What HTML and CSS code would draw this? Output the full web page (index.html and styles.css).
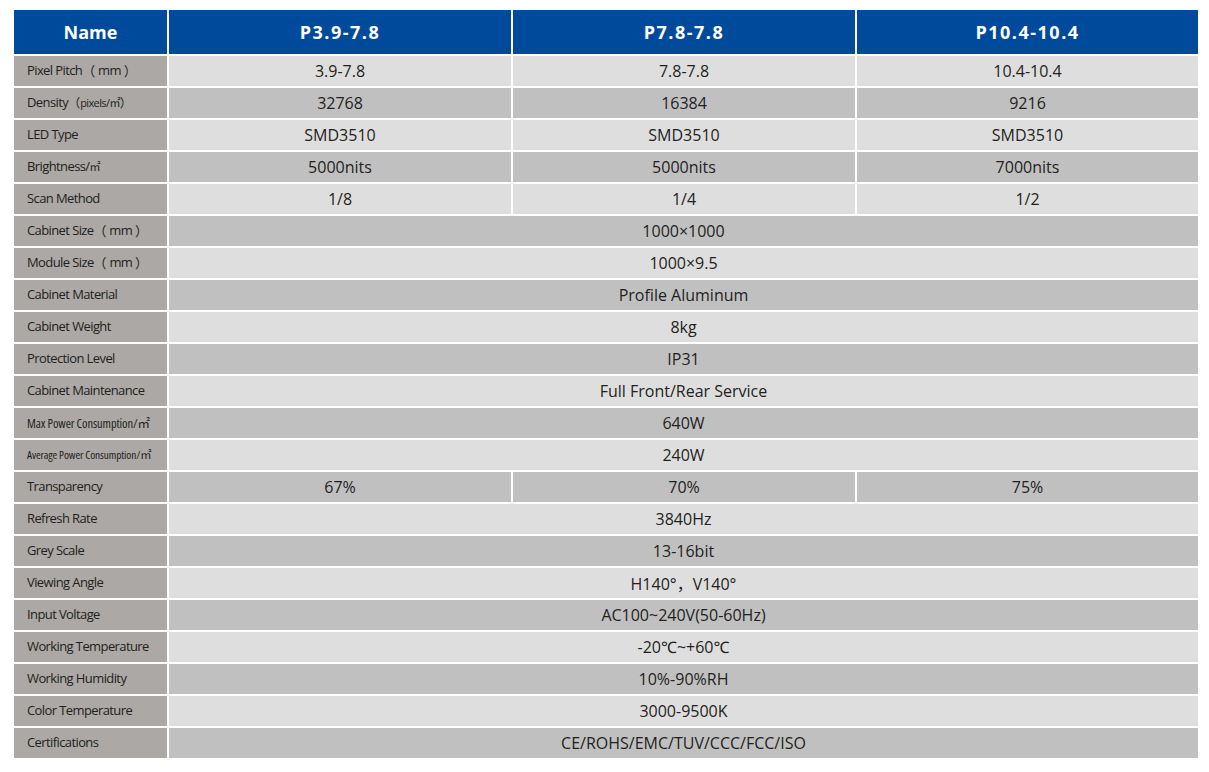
FILE: index.html
```html
<!DOCTYPE html>
<html lang="en">
<head>
<meta charset="utf-8">
<title>Specifications</title>
<link rel="stylesheet" href="styles.css">
</head>
<body>
<div class="spec">
  <div class="hd hd-name">Name</div>
  <div class="hd">P3.9-7.8</div>
  <div class="hd">P7.8-7.8</div>
  <div class="hd">P10.4-10.4</div>

  <div class="lb">Pixel Pitch<span class="fw">（</span>&nbsp;mm&nbsp;<span class="fw">）</span></div>
  <div class="v l">3.9-7.8</div><div class="v l">7.8-7.8</div><div class="v l">10.4-10.4</div>

  <div class="lb">Density<span class="fw fw-sm">（</span><span class="sm">pixels/㎡</span><span class="fw fw-sm">）</span></div>
  <div class="v d">32768</div><div class="v d">16384</div><div class="v d">9216</div>

  <div class="lb">LED Type</div>
  <div class="v l">SMD3510</div><div class="v l">SMD3510</div><div class="v l">SMD3510</div>

  <div class="lb">Brightness/<span class="sm">㎡</span></div>
  <div class="v d">5000nits</div><div class="v d">5000nits</div><div class="v d">7000nits</div>

  <div class="lb">Scan Method</div>
  <div class="v l">1/8</div><div class="v l">1/4</div><div class="v l">1/2</div>

  <div class="lb">Cabinet Size<span class="fw">（</span>&nbsp;mm&nbsp;<span class="fw">）</span></div>
  <div class="v d span">1000×1000</div>

  <div class="lb">Module Size<span class="fw">（</span>&nbsp;mm&nbsp;<span class="fw">）</span></div>
  <div class="v l span">1000×9.5</div>

  <div class="lb">Cabinet Material</div>
  <div class="v d span">Profile Aluminum</div>

  <div class="lb">Cabinet Weight</div>
  <div class="v l span">8kg</div>

  <div class="lb">Protection Level</div>
  <div class="v d span">IP31</div>

  <div class="lb">Cabinet Maintenance</div>
  <div class="v l span">Full Front/Rear Service</div>

  <div class="lb"><span class="cond">Max Power Consumption/㎡</span></div>
  <div class="v d span">640W</div>

  <div class="lb"><span class="cond cond-sm">Average Power Consumption/㎡</span></div>
  <div class="v l span">240W</div>

  <div class="lb">Transparency</div>
  <div class="v d">67%</div><div class="v d">70%</div><div class="v d">75%</div>

  <div class="lb">Refresh Rate</div>
  <div class="v l span">3840Hz</div>

  <div class="lb">Grey Scale</div>
  <div class="v d span">13-16bit</div>

  <div class="lb">Viewing Angle</div>
  <div class="v l span">H140°，V140°</div>

  <div class="lb">Input Voltage</div>
  <div class="v d span">AC100~240V(50-60Hz)</div>

  <div class="lb">Working Temperature</div>
  <div class="v l span">-20℃~+60℃</div>

  <div class="lb">Working Humidity</div>
  <div class="v d span">10%-90%RH</div>

  <div class="lb">Color Temperature</div>
  <div class="v l span">3000-9500K</div>

  <div class="lb">Certifications</div>
  <div class="v d span">CE/ROHS/EMC/TUV/CCC/FCC/ISO</div>
</div>
</body>
</html>
```

FILE: styles.css
```css
html, body {
  margin: 0;
  padding: 0;
  background: #ffffff;
}

body {
  font-family: "Open Sans", "Noto Sans", "Noto Sans CJK SC", sans-serif;
  color: #231f20;
}

.spec {
  display: grid;
  grid-template-columns: 153px 342px 342px 341px;
  grid-template-rows: 44px;
  grid-auto-rows: 30px;
  gap: 2px;
  margin: 10px 0 0 14px;
  width: 1184px;
}

.hd {
  background: #004a9c;
  color: #ffffff;
  font-weight: 700;
  font-size: 18px;
  letter-spacing: 1.5px;
  display: flex;
  align-items: center;
  justify-content: center;
}

.hd-name {
  letter-spacing: 0;
}

.lb {
  background: #aba8a5;
  font-size: 13px;
  letter-spacing: -0.6px;
  display: flex;
  align-items: center;
  padding-left: 13px;
  padding-bottom: 2px;
  white-space: nowrap;
  overflow: hidden;
}

.fw {
  font-family: "Noto Sans CJK SC", sans-serif;
  letter-spacing: 0;
}

.fw-sm {
  font-size: 12px;
}

.sm {
  font-size: 11px;
  font-family: "Open Sans", "Noto Sans CJK SC", sans-serif;
}

.cond {
  display: inline-block;
  font-stretch: 75%;
  font-size: 12.5px;
  letter-spacing: -0.1px;
}

.cond-sm {
  font-size: 11.3px;
  letter-spacing: -0.1px;
}

.v {
  font-size: 16px;
  display: flex;
  align-items: center;
  justify-content: center;
}

.l {
  background: #dedede;
}

.d {
  background: #c0c0c0;
}

.span {
  grid-column: span 3;
}
```
